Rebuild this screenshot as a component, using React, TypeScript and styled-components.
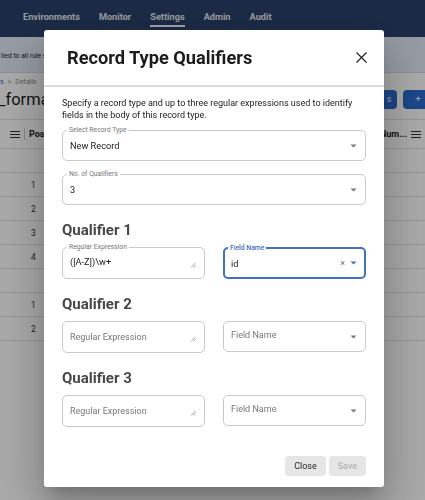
import React from 'react';
import styled, { createGlobalStyle } from 'styled-components';

const Global = createGlobalStyle`
  html, body { margin: 0; padding: 0; }
  body {
    font-family: Roboto, "Liberation Sans", Arial, sans-serif;
    background: #fff;
    width: 425px;
    height: 500px;
    overflow: hidden;
  }
  * { box-sizing: border-box; }
`;

/* ---------- background page ---------- */
const Page = styled.div`
  width: 425px;
  height: 500px;
  display: flex;
  flex-direction: column;
  background: #fff;
  overflow: hidden;
`;

const NavBar = styled.div`
  height: 37px;
  background: #2a416b;
  display: flex;
  align-items: flex-start;
  padding: 11px 0 0 23px;
  gap: 19px;
`;

const NavItem = styled.span<{ $active?: boolean }>`
  font-size: 9.2px;
  font-weight: 700;
  color: #e6ebf3;
  line-height: 12px;
  padding-bottom: 2px;
  border-bottom: 2px solid ${p => (p.$active ? '#f4f6fa' : 'transparent')};
`;

const Banner = styled.div`
  height: 36px;
  background: #e4ecf7;
  border-bottom: 1px solid #d5dbe4;
  display: flex;
  align-items: center;
  padding: 3px 0 0 1px;
  font-size: 6.8px;
  color: #223;
  white-space: nowrap;
`;

const Content = styled.div`
  display: flex;
  flex-direction: column;
`;

const Crumbs = styled.div`
  height: 14px;
  display: flex;
  align-items: flex-end;
  gap: 4px;
  font-size: 7px;
  line-height: 9px;
  color: #888;
`;

const CrumbLink = styled.span`
  color: #2a6bcf;
`;

const TitleRow = styled.div`
  height: 24px;
  display: flex;
  align-items: center;
  justify-content: space-between;
`;

const PageTitle = styled.div`
  font-size: 16.5px;
  font-weight: 400;
  color: #1a1a1a;
  white-space: nowrap;
  margin-left: -2px;
`;

const Actions = styled.div`
  display: flex;
  gap: 6px;
  margin-right: -8px;
`;

const BlueButton = styled.div<{ $w: number }>`
  width: ${p => p.$w}px;
  height: 19px;
  border-radius: 4px;
  background: #2a6bcf;
  color: #fff;
  display: flex;
  align-items: center;
  justify-content: center;
  font-size: 9px;
`;

const Table = styled.div`
  margin-top: 8px;
  border-top: 1px solid #e2e2e2;
  display: flex;
  flex-direction: column;
`;

const HeaderRow = styled.div`
  height: 29px;
  border-bottom: 1px solid #e2e2e2;
  display: flex;
  align-items: center;
  justify-content: space-between;
  padding: 0 4px 0 10px;
  font-size: 9px;
  font-weight: 700;
  color: #222;
`;

const HeadCell = styled.div`
  display: flex;
  align-items: center;
  gap: 4px;
`;

const Sep = styled.span`
  width: 1px;
  height: 12px;
  background: #ccc;
`;

const Row = styled.div`
  height: 24px;
  border-bottom: 1px solid #e2e2e2;
  display: flex;
  align-items: center;
  padding-left: 31px;
  font-size: 8.5px;
  color: #333;
`;

const Menu = () => (
  <svg width="10" height="9" viewBox="0 0 10 9">
    <path d="M0 1.5h10M0 4.5h10M0 7.5h10" stroke="#333" strokeWidth="1.2" />
  </svg>
);

/* ---------- modal ---------- */
const Backdrop = styled.div`
  position: fixed;
  inset: 0;
  background: rgba(0, 0, 0, 0.34);
`;

const Dialog = styled.div`
  position: fixed;
  top: 30px;
  left: 44px;
  width: 340px;
  height: 457px;
  background: #fff;
  border-radius: 3px;
  box-shadow: 0 11px 15px -7px rgba(0, 0, 0, 0.2), 0 24px 38px 3px rgba(0, 0, 0, 0.14),
    0 9px 46px 8px rgba(0, 0, 0, 0.12);
  display: flex;
  flex-direction: column;
`;

const DialogHeader = styled.div`
  height: 57px;
  border-bottom: 2px solid #dcdcdc;
  display: flex;
  align-items: center;
  justify-content: space-between;
  padding: 0 17px 0 23px;
`;

const DialogTitle = styled.h2`
  margin: 0;
  font-size: 18.2px;
  font-weight: 700;
  color: #1c1c1c;
`;

const CloseIcon = () => (
  <svg width="11" height="11" viewBox="0 0 11 11">
    <path d="M0.5 0.5L10.5 10.5M10.5 0.5L0.5 10.5" stroke="#2a2a2a" strokeWidth="1.3" />
  </svg>
);

const Body = styled.div`
  display: flex;
  flex-direction: column;
  padding: 10px 18px 11px;
  flex: 1;
`;

const Description = styled.p`
  margin: 0 0 9px;
  font-size: 9px;
  line-height: 12px;
  color: #222;
`;

const Stack = styled.div`
  display: flex;
  flex-direction: column;
  gap: 13px;
`;

const QualifierHeading = styled.h3`
  margin: 16px 0 8px;
  font-size: 15px;
  line-height: 18px;
  font-weight: 700;
  color: #474747;
`;

const Pair = styled.div`
  display: grid;
  grid-template-columns: 1fr 1fr;
  gap: 18px;
  align-items: start;
`;

const Outlined = styled.div<{ $focused?: boolean; $h: number; $top?: boolean }>`
  position: relative;
  height: ${p => p.$h}px;
  border: ${p => (p.$focused ? '2px solid #3f72bf' : '1px solid #c9c9c9')};
  border-radius: 5px;
  display: flex;
  align-items: ${p => (p.$top ? 'flex-start' : 'center')};
  padding: ${p => (p.$focused ? '0 7px 0 6px' : p.$top ? '8px 8px 0 7px' : '0 8px 0 7px')};
`;

const FloatLabel = styled.span<{ $focused?: boolean }>`
  position: absolute;
  top: -5px;
  left: ${p => (p.$focused ? '3px' : '4px')};
  padding: 0 2px;
  background: #fff;
  font-size: 6.8px;
  line-height: 9px;
  font-weight: ${p => (p.$focused ? 500 : 400)};
  color: ${p => (p.$focused ? '#3f72bf' : '#777')};
  white-space: nowrap;
`;

const Value = styled.span`
  flex: 1;
  font-size: 9.2px;
  color: #1a1a1a;
  white-space: nowrap;
`;

const Placeholder = styled.span<{ $lift?: boolean }>`
  flex: 1;
  font-size: 9px;
  color: #777;
  margin-top: ${p => (p.$lift ? '-3px' : '0')};
`;

const Caret = ({ color = '#777' }: { color?: string }) => (
  <svg width="7" height="4" viewBox="0 0 7 4">
    <path d="M0.5 0.5h6L3.5 3.5z" fill={color} />
  </svg>
);

const Handle = styled.span<{ $top?: number }>`
  display: flex;
  margin-top: ${p => p.$top ?? 0}px;
`;

const ResizeIcon = () => (
  <svg width="6" height="6" viewBox="0 0 6 6">
    <path d="M5.5 1L1 5.5M5.5 3.5L3.5 5.5" stroke="#8a8a8a" strokeWidth="0.8" />
  </svg>
);

const Clear = styled.span`
  font-size: 9px;
  color: #666;
  margin-right: 5px;
  line-height: 1;
`;

const Footer = styled.div`
  margin-top: auto;
  display: flex;
  justify-content: flex-end;
  gap: 3px;
`;

const Button = styled.button<{ $disabled?: boolean }>`
  height: 20px;
  padding: 0 9px;
  border: none;
  border-radius: 4px;
  background: #e6e6e6;
  font-family: inherit;
  font-size: 9px;
  color: ${p => (p.$disabled ? '#a8a8a8' : '#1e1e1e')};
`;

type SelectProps = { label?: string; value?: string; placeholder?: string; focused?: boolean; clear?: boolean; h?: number };

const Select = ({ label, value, placeholder, focused, clear, h = 31 }: SelectProps) => (
  <Outlined $focused={focused} $h={h}>
    {label && <FloatLabel $focused={focused}>{label}</FloatLabel>}
    {value ? <Value>{value}</Value> : <Placeholder $lift>{placeholder}</Placeholder>}
    {clear && <Clear>×</Clear>}
    <Caret color={focused ? '#3f72bf' : '#777'} />
  </Outlined>
);

const TextArea = ({ value }: { value?: string }) =>
  value ? (
    <Outlined $h={32} $top>
      <FloatLabel>Regular Expression</FloatLabel>
      <Value>{value}</Value>
      <Handle $top={6}>
        <ResizeIcon />
      </Handle>
    </Outlined>
  ) : (
    <Outlined $h={32}>
      <Placeholder>Regular Expression</Placeholder>
      <Handle $top={4}>
        <ResizeIcon />
      </Handle>
    </Outlined>
  );

export default function App() {
  return (
    <>
      <Global />
      <Page>
        <NavBar>
          <NavItem>Environments</NavItem>
          <NavItem>Monitor</NavItem>
          <NavItem $active>Settings</NavItem>
          <NavItem>Admin</NavItem>
          <NavItem>Audit</NavItem>
        </NavBar>
        <Banner>lied to all rule sets in this environment.</Banner>
        <Content>
          <Crumbs>
            <CrumbLink>s</CrumbLink>
            <span>&gt;</span>
            <span>Details</span>
          </Crumbs>
          <TitleRow>
            <PageTitle>_format</PageTitle>
            <Actions>
              <BlueButton $w={16}>s</BlueButton>
              <BlueButton $w={30}>+</BlueButton>
            </Actions>
          </TitleRow>
          <Table>
            <HeaderRow>
              <HeadCell>
                <Menu />
                <Sep />
                <span>Pos</span>
              </HeadCell>
              <HeadCell>
                <span>Num...</span>
                <Menu />
              </HeadCell>
            </HeaderRow>
            {['', '1', '2', '3', '4', '', '1', '2'].map((n, i) => (
              <Row key={i}>{n}</Row>
            ))}
          </Table>
        </Content>
      </Page>
      <Backdrop />
      <Dialog>
        <DialogHeader>
          <DialogTitle>Record Type Qualifiers</DialogTitle>
          <CloseIcon />
        </DialogHeader>
        <Body>
          <Description>
            Specify a record type and up to three regular expressions used to identify fields in the body of this
            record type.
          </Description>
          <Stack>
            <Select label="Select Record Type" value="New Record" />
            <Select label="No. of Qualifiers" value="3" />
          </Stack>
          <QualifierHeading>Qualifier 1</QualifierHeading>
          <Pair>
            <TextArea value="([A-Z])\w+" />
            <Select label="Field Name" value="id" focused clear h={32} />
          </Pair>
          <QualifierHeading>Qualifier 2</QualifierHeading>
          <Pair>
            <TextArea />
            <Select placeholder="Field Name" />
          </Pair>
          <QualifierHeading>Qualifier 3</QualifierHeading>
          <Pair>
            <TextArea />
            <Select placeholder="Field Name" />
          </Pair>
          <Footer>
            <Button>Close</Button>
            <Button $disabled>Save</Button>
          </Footer>
        </Body>
      </Dialog>
    </>
  );
}
